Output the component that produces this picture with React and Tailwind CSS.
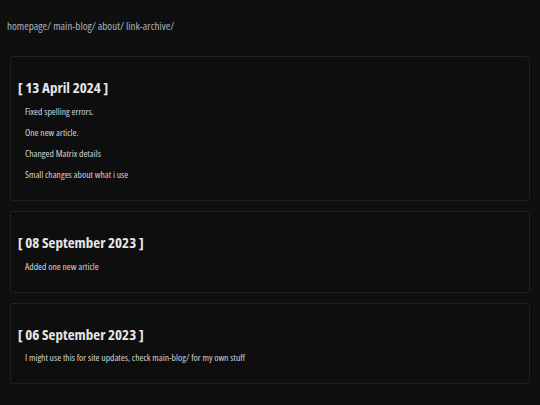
import React from "react";

const updates = [
  {
    date: "13 April 2024",
    items: [
      "Fixed spelling errors.",
      "One new article.",
      "Changed Matrix details",
      "Small changes about what i use",
    ],
  },
  { date: "08 September 2023", items: ["Added one new article"] },
  {
    date: "06 September 2023",
    items: ["I might use this for site updates, check main-blog/ for my own stuff"],
  },
];

const links = ["homepage/", "main-blog/", "about/", "link-archive/"];

export default function App() {
  return (
    <div
      className="min-h-[405px] w-full bg-[#0f0f0f] pb-6 font-stretch-condensed antialiased"
      style={{ fontFamily: '"Open Sans", "DejaVu Sans", sans-serif' }}
    >
      <nav className="px-[7px] pt-[19px] text-[11px] leading-[14px] text-[#a7b3bf]">
        {links.map((l, i) => (
          <React.Fragment key={l}>
            {i > 0 && " "}
            <a href="#" className="hover:underline">
              {l}
            </a>
          </React.Fragment>
        ))}
      </nav>
      <div className="mt-[23px] flex flex-col gap-[10px] px-[10px]">
        {updates.map((u) => (
          <section
            key={u.date}
            className="rounded-[3px] border border-dotted border-[#333333] bg-[#0e0e0e] px-[7px] pt-[20px] pb-[19px]"
          >
            <h2 className="text-[15px] font-bold leading-[20px] text-[#e6e6e6]">
              [ {u.date} ]
            </h2>
            <ul className="mt-[8.5px] flex flex-col gap-[9.3px] pl-[7px]">
              {u.items.map((it) => (
                <li key={it} className="text-[9.6px] leading-[12px] text-[#d4d4d4]">
                  {it}
                </li>
              ))}
            </ul>
          </section>
        ))}
      </div>
    </div>
  );
}
